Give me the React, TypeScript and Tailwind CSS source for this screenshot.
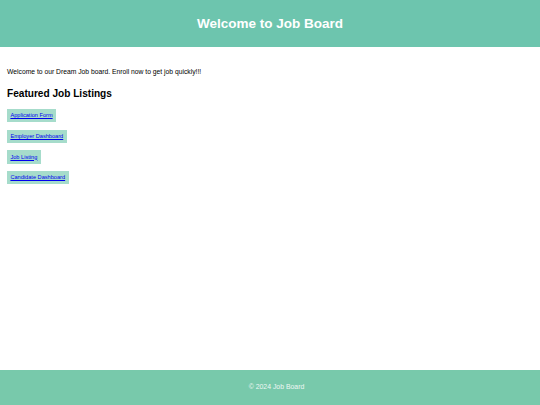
const links = [
  "Application Form",
  "Employer Dashboard",
  "Job Listing",
  "Candidate Dashboard",
];

function App() {
  return (
    <div className="min-h-screen flex flex-col bg-white font-['Liberation_Sans',Arial,sans-serif]">
      <header className="h-[47px] bg-[#6dc5ae] flex items-center justify-center">
        <h1 className="text-[13.5px] leading-none font-bold text-white">
          Welcome to Job Board
        </h1>
      </header>

      <main className="flex-1 px-[7px]">
        <p className="mt-[20.5px] text-[6.75px] leading-[7.8px] text-black">
          Welcome to our Dream Job board. Enroll now to get job quickly!!!
        </p>
        <h2 className="mt-[13px] text-[10.1px] leading-[11.6px] font-bold text-black">
          Featured Job Listings
        </h2>
        <div className="mt-[9px] flex flex-col items-start gap-[7.4px]">
          {links.map((label) => (
            <div key={label} className="bg-[#a6dccb] px-[3.4px] py-[3.4px]">
              <a
                href="#"
                className="block text-[5.63px] leading-[6.5px] text-[#0000ee] underline"
              >
                {label}
              </a>
            </div>
          ))}
        </div>
      </main>

      <footer className="h-[35px] bg-[#78c9ab] flex items-center justify-center pl-[13px]">
        <p className="text-[6.9px] leading-none text-[#eef7f3]">
          © 2024 Job Board
        </p>
      </footer>
    </div>
  );
}

export default App;
